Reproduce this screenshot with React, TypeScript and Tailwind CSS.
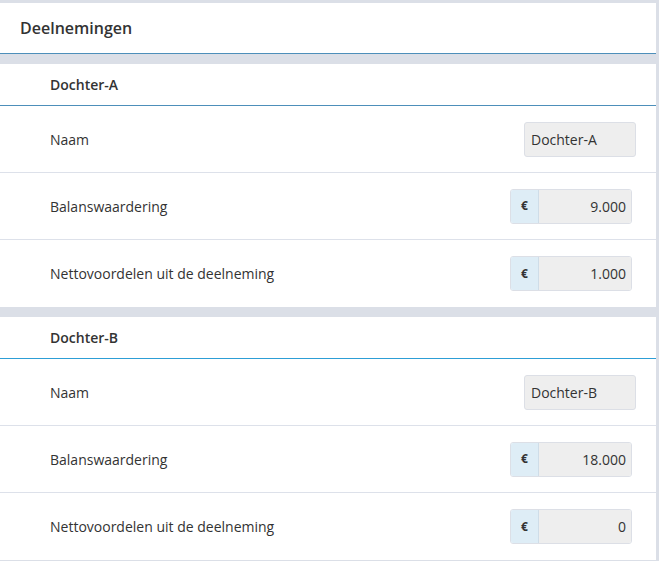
const font = { fontFamily: '"Open Sans", "Noto Sans", sans-serif' };

type Row = { label: string; value: string; euro?: boolean };

const sections: { title: string; line: string; rows: Row[] }[] = [
  {
    title: "Dochter-A",
    line: "border-[#4d8fba]",
    rows: [
      { label: "Naam", value: "Dochter-A" },
      { label: "Balanswaardering", value: "9.000", euro: true },
      { label: "Nettovoordelen uit de deelneming", value: "1.000", euro: true },
    ],
  },
  {
    title: "Dochter-B",
    line: "border-[#2d9ed6]",
    rows: [
      { label: "Naam", value: "Dochter-B" },
      { label: "Balanswaardering", value: "18.000", euro: true },
      { label: "Nettovoordelen uit de deelneming", value: "0", euro: true },
    ],
  },
];

function Field({ row }: { row: Row }) {
  if (!row.euro) {
    return (
      <div className="w-[112px] h-[35px] flex items-center px-[6px] bg-[#eeeeee] border border-[#dcdfe6] rounded-[3px] text-[14px] text-[#333]">
        {row.value}
      </div>
    );
  }
  return (
    <div className="mr-[4px] w-[122px] h-[35px] flex border border-[#dcdfe6] rounded-[3px] overflow-hidden text-[14px] text-[#333]">
      <div className="w-[28px] flex items-center justify-center bg-[#deedf6] border-r border-[#cfdde8] font-bold text-[12px]">
        €
      </div>
      <div className="flex-1 flex items-center justify-end pr-[5px] bg-[#eeeeee]">{row.value}</div>
    </div>
  );
}

export default function App() {
  return (
    <div className="w-[659px] h-[561px] bg-[#dbdfe7] pt-[3px] pr-[3px] pb-[2px]" style={font}>
      <div className="bg-white h-[51px] border-b border-[#4d8fba] flex items-center pl-5 text-[16px] font-semibold text-[#333]">
        Deelnemingen
      </div>
      {sections.map((s) => (
        <div key={s.title} className="mt-[10px] bg-white">
          <div className={`h-[42px] border-b ${s.line} flex items-center pl-[50px] text-[14px] font-semibold text-[#333]`}>
            {s.title}
          </div>
          {s.rows.map((r, i) => (
            <div
              key={r.label}
              className={`h-[67px] flex items-center justify-between pl-[50px] pr-5 ${
                i < s.rows.length - 1 ? "border-b border-[#dde1ea]" : ""
              }`}
            >
              <span className="text-[14px] text-[#333]">{r.label}</span>
              <Field row={r} />
            </div>
          ))}
        </div>
      ))}
    </div>
  );
}
